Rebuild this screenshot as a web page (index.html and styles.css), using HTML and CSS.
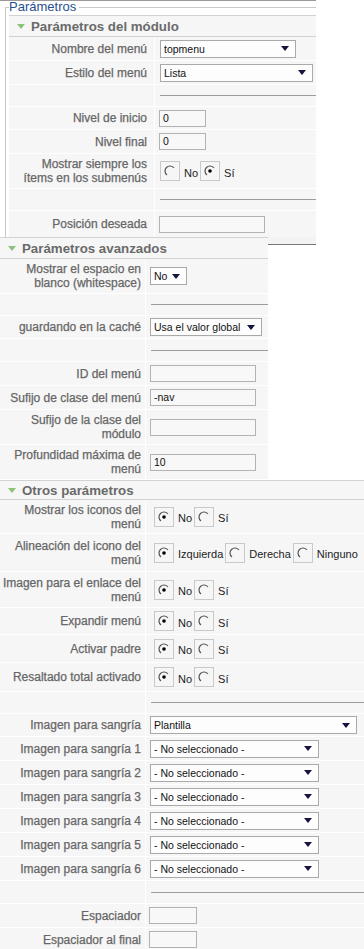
FILE: index.html
```html
<!DOCTYPE html>
<html lang="es">
<head>
<meta charset="utf-8">
<title>Parámetros</title>
<link rel="stylesheet" href="styles.css">
</head>
<body>
<div class="page">
  <div class="topline"></div>
  <fieldset class="params">
    <legend>Parámetros</legend>
    <section class="panel panel-1">
      <div class="pane-head head-1"><span class="tri"></span>Parámetros del módulo</div>
      <div class="row h24"><div class="key"><span>Nombre del menú</span></div><div class="val"><div class="sel w136"><span>topmenu</span><span class="arr"></span></div></div></div>
      <div class="row h24"><div class="key"><span>Estilo del menú</span></div><div class="val"><div class="sel w153"><span>Lista</span><span class="arr"></span></div></div></div>
      <div class="row h22"><div class="key"></div><div class="val"><div class="hr"></div></div></div>
      <div class="row h23"><div class="key"><span>Nivel de inicio</span></div><div class="val"><div class="inp w47">0</div></div></div>
      <div class="row h24"><div class="key"><span>Nivel final</span></div><div class="val"><div class="inp w47">0</div></div></div>
      <div class="row h35"><div class="key"><span>Mostrar siempre los<br>ítems en los submenús</span></div>
        <div class="val radios">
          <span class="rb"><svg viewBox="0 0 18 18" width="18" height="18"><path d="M13 6 A5 5 0 1 0 6 13" /></svg></span><span class="rl">No</span>
          <span class="rb"><svg viewBox="0 0 18 18" width="18" height="18"><path d="M13 6 A5 5 0 1 0 6 13" /><circle cx="9" cy="9" r="1.8" /></svg></span><span class="rl">Sí</span>
        </div></div>
      <div class="row h22"><div class="key"></div><div class="val"><div class="hr"></div></div></div>
      <div class="row h26 last"><div class="key"><span>Posición deseada</span></div><div class="val"><div class="inp w106"></div></div></div>
    </section>
  </fieldset>

  <div class="band">
    <section class="panel panel-2">
      <div class="pane-head head-2"><span class="tri"></span>Parámetros avanzados</div>
      <div class="row h35"><div class="key"><span>Mostrar el espacio en<br>blanco (whitespace)</span></div><div class="val"><div class="sel w37"><span>No</span><span class="arr"></span></div></div></div>
      <div class="row h22"><div class="key"></div><div class="val"><div class="hr"></div></div></div>
      <div class="row h23"><div class="key"><span>guardando en la caché</span></div><div class="val"><div class="sel w112"><span>Usa el valor global</span><span class="arr"></span></div></div></div>
      <div class="row h23"><div class="key"></div><div class="val"><div class="hr"></div></div></div>
      <div class="row h24"><div class="key"><span>ID del menú</span></div><div class="val"><div class="inp w106"></div></div></div>
      <div class="row h24"><div class="key"><span>Sufijo de clase del menú</span></div><div class="val"><div class="inp w106">-nav</div></div></div>
      <div class="row h35"><div class="key"><span>Sufijo de la clase del<br>módulo</span></div><div class="val"><div class="inp w106"></div></div></div>
      <div class="row h35"><div class="key"><span>Profundidad máxima de<br>menú</span></div><div class="val"><div class="inp w106">10</div></div></div>
    </section>
    <div class="filler"></div>
  </div>

  <section class="panel panel-3">
    <div class="pane-head head-3"><span class="tri"></span>Otros parámetros</div>
    <div class="row h34"><div class="key"><span>Mostrar los iconos del<br>menú</span></div>
      <div class="val radios r3">
        <span class="rb"><svg viewBox="0 0 18 18" width="18" height="18"><path d="M13 6 A5 5 0 1 0 6 13" /><circle cx="9" cy="9" r="1.8" /></svg></span><span class="rl">No</span>
        <span class="rb"><svg viewBox="0 0 18 18" width="18" height="18"><path d="M13 6 A5 5 0 1 0 6 13" /></svg></span><span class="rl">Sí</span>
      </div></div>
    <div class="row h38"><div class="key"><span>Alineación del icono del<br>menú</span></div>
      <div class="val radios r3">
        <span class="rb"><svg viewBox="0 0 18 18" width="18" height="18"><path d="M13 6 A5 5 0 1 0 6 13" /><circle cx="9" cy="9" r="1.8" /></svg></span><span class="rl">Izquierda</span>
        <span class="rb"><svg viewBox="0 0 18 18" width="18" height="18"><path d="M13 6 A5 5 0 1 0 6 13" /></svg></span><span class="rl">Derecha</span>
        <span class="rb"><svg viewBox="0 0 18 18" width="18" height="18"><path d="M13 6 A5 5 0 1 0 6 13" /></svg></span><span class="rl">Ninguno</span>
      </div></div>
    <div class="row h36"><div class="key"><span>Imagen para el enlace del<br>menú</span></div>
      <div class="val radios r3">
        <span class="rb"><svg viewBox="0 0 18 18" width="18" height="18"><path d="M13 6 A5 5 0 1 0 6 13" /><circle cx="9" cy="9" r="1.8" /></svg></span><span class="rl">No</span>
        <span class="rb"><svg viewBox="0 0 18 18" width="18" height="18"><path d="M13 6 A5 5 0 1 0 6 13" /></svg></span><span class="rl">Sí</span>
      </div></div>
    <div class="row h27"><div class="key"><span>Expandir menú</span></div>
      <div class="val radios r3">
        <span class="rb"><svg viewBox="0 0 18 18" width="18" height="18"><path d="M13 6 A5 5 0 1 0 6 13" /><circle cx="9" cy="9" r="1.8" /></svg></span><span class="rl">No</span>
        <span class="rb"><svg viewBox="0 0 18 18" width="18" height="18"><path d="M13 6 A5 5 0 1 0 6 13" /></svg></span><span class="rl">Sí</span>
      </div></div>
    <div class="row h28"><div class="key"><span>Activar padre</span></div>
      <div class="val radios r3">
        <span class="rb"><svg viewBox="0 0 18 18" width="18" height="18"><path d="M13 6 A5 5 0 1 0 6 13" /><circle cx="9" cy="9" r="1.8" /></svg></span><span class="rl">No</span>
        <span class="rb"><svg viewBox="0 0 18 18" width="18" height="18"><path d="M13 6 A5 5 0 1 0 6 13" /></svg></span><span class="rl">Sí</span>
      </div></div>
    <div class="row h29"><div class="key"><span>Resaltado total activado</span></div>
      <div class="val radios r3">
        <span class="rb"><svg viewBox="0 0 18 18" width="18" height="18"><path d="M13 6 A5 5 0 1 0 6 13" /><circle cx="9" cy="9" r="1.8" /></svg></span><span class="rl">No</span>
        <span class="rb"><svg viewBox="0 0 18 18" width="18" height="18"><path d="M13 6 A5 5 0 1 0 6 13" /></svg></span><span class="rl">Sí</span>
      </div></div>
    <div class="row h22"><div class="key"></div><div class="val"><div class="hr"></div></div></div>
    <div class="row h23"><div class="key"><span>Imagen para sangría</span></div><div class="val"><div class="sel w207"><span>Plantilla</span><span class="arr"></span></div></div></div>
    <div class="row h24"><div class="key"><span>Imagen para sangría 1</span></div><div class="val"><div class="sel w169"><span>- No seleccionado -</span><span class="arr"></span></div></div></div>
    <div class="row h24"><div class="key"><span>Imagen para sangría 2</span></div><div class="val"><div class="sel w169"><span>- No seleccionado -</span><span class="arr"></span></div></div></div>
    <div class="row h24"><div class="key"><span>Imagen para sangría 3</span></div><div class="val"><div class="sel w169"><span>- No seleccionado -</span><span class="arr"></span></div></div></div>
    <div class="row h24"><div class="key"><span>Imagen para sangría 4</span></div><div class="val"><div class="sel w169"><span>- No seleccionado -</span><span class="arr"></span></div></div></div>
    <div class="row h24"><div class="key"><span>Imagen para sangría 5</span></div><div class="val"><div class="sel w169"><span>- No seleccionado -</span><span class="arr"></span></div></div></div>
    <div class="row h24"><div class="key"><span>Imagen para sangría 6</span></div><div class="val"><div class="sel w169"><span>- No seleccionado -</span><span class="arr"></span></div></div></div>
    <div class="row h23"><div class="key"></div><div class="val"><div class="hr"></div></div></div>
    <div class="row h24"><div class="key"><span>Espaciador</span></div><div class="val"><div class="inp w48 nudge"></div></div></div>
    <div class="row h24"><div class="key"><span>Espaciador al final</span></div><div class="val"><div class="inp w48 nudge"></div></div></div>
  </section>
</div>
</body>
</html>
```

FILE: styles.css
```css
* { box-sizing: border-box; }
html, body { margin: 0; padding: 0; background: #fff; }
body {
  font-family: "Liberation Sans", Arial, sans-serif;
  font-size: 11px;
  color: #333;
  overflow: hidden;
}
.page { width: 364px; }

.topline { width: 316px; height: 1px; background: #9a9a9a; }

.params {
  margin: 0 0 0 5px;
  width: 311px;
  border: 1px solid #c8c8c8;
  border-right: none;
  border-bottom: none;
  padding: 0 0 0 3px;
  min-inline-size: 0;
}
.params legend {
  padding: 0 3px 0 0;
  font-size: 13px;
  line-height: 12px;
  color: #1f4f8f;
}

.panel { background: #f6f6f6; }
.panel-1 { width: 307px; margin-top: 2px; --key: 146px; --kpad: 7px; }
.panel-2 { width: 268px; --key: 146px; --kpad: 4px; }
.panel-3 { width: 364px; --key: 146px; --kpad: 4px; }

.pane-head {
  display: flex;
  align-items: center;
  gap: 6px;
  border-top: 1px solid #d2d2d2;
  border-bottom: 1px solid #d2d2d2;
  font-size: 13.3px;
  font-weight: bold;
  color: #6a6a6a;
}
.head-1 { height: 22px; padding-left: 8px; }
.head-2 { height: 22px; padding-left: 8px; }
.head-3 { height: 20px; padding-left: 8px; }
.tri {
  width: 0; height: 0;
  border-left: 4px solid transparent;
  border-right: 4px solid transparent;
  border-top: 5px solid #8dc27a;
  margin-top: 1px;
}

.row {
  display: grid;
  grid-template-columns: var(--key) 1fr;
}
.key {
  display: flex;
  align-items: center;
  justify-content: flex-end;
  text-align: right;
  padding-right: var(--kpad);
  border-right: 1px solid #fff;
  border-bottom: 1px solid #fff;
  color: #666;
  font-weight: normal;
  font-size: 12px;
  line-height: 14px;
  -webkit-text-stroke: 0.25px #666;
}
.val {
  display: flex;
  align-items: center;
  padding-left: 4px;
  border-bottom: 1px solid #fff;
  min-width: 0;
}
.last .key, .last .val { border-bottom: none; }

.h22 { height: 22px; } .h23 { height: 23px; } .h24 { height: 24px; }
.h26 { height: 26px; } .h27 { height: 27px; } .h28 { height: 28px; }
.h29 { height: 29px; } .h34 { height: 34px; } .h35 { height: 35px; }
.h36 { height: 36px; } .h38 { height: 38px; }

.hr { flex: 1; height: 0; border-top: 1px solid #9c9c9c; margin-left: 1px; }

.sel {
  height: 18px;
  border: 1px solid #a9a9a9;
  background: #fdfdfd;
  display: flex;
  align-items: center;
  justify-content: space-between;
  padding: 0 6px 0 3px;
  font-size: 10.5px;
  color: #111;
  margin-left: 1px;
  white-space: nowrap;
}
.arr {
  width: 0; height: 0;
  border-left: 4px solid transparent;
  border-right: 4px solid transparent;
  border-top: 5px solid #14143c;
  flex: none;
}
.panel-2 .sel, .panel-3 .sel { margin-left: 0; }

.inp {
  height: 17px;
  border: 1px solid #b3b3b3;
  background: #f8f8f8;
  font-size: 10.5px;
  line-height: 15px;
  padding-left: 3px;
  color: #111;
}
.nudge { margin-left: -1px; }
.w37 { width: 37px; } .w47 { width: 47px; } .w48 { width: 48px; }
.w106 { width: 106px; } .w112 { width: 112px; } .w136 { width: 136px; }
.w153 { width: 153px; } .w169 { width: 169px; } .w207 { width: 207px; }

.radios { padding-left: 5px; }
.radios.r3 { padding-left: 8px; }
.rb {
  width: 20px; height: 20px;
  border: 1px solid #c9c9c9;
  display: inline-flex;
  flex: none;
}
.rb svg { display: block; }
.rb path { fill: none; stroke: #555; stroke-width: 1.2; }
.rb circle { fill: #000; }
.rl {
  margin: 3px 2px 0 4px;
  font-size: 11px;
  color: #222;
}

.band { display: flex; align-items: flex-start; }
.filler {
  width: 48px;
  height: 8px;
  background: #f3f3f3;
  border-bottom: 1px solid #777;
}
```
